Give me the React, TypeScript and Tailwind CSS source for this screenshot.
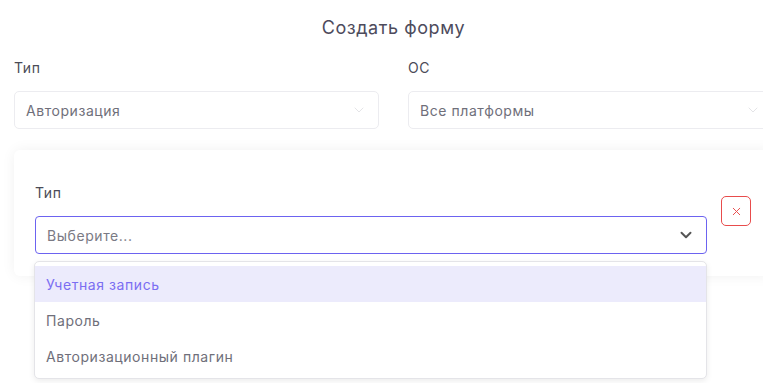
import { ChevronDown, X } from "lucide-react";

const options = ["Учетная запись", "Пароль", "Авторизационный плагин"];

function TopSelect({ label, value }: { label: string; value: string }) {
  return (
    <div>
      <div className="text-[14px] text-[#4b4b57] mb-[14px] leading-[18px]">{label}</div>
      <div className="h-[38px] flex items-center justify-between px-[11px] border border-[#ececf0] rounded-[5px] bg-white">
        <span className="text-[14px] text-[#6f6f7a]">{value}</span>
        <ChevronDown size={16} strokeWidth={1.1} className="text-[#dadade]" />
      </div>
    </div>
  );
}

export default function App() {
  return (
    <div
      className="w-[763px] h-[383px] overflow-hidden bg-white tracking-[0.035em]"
      style={{ fontFamily: "Inter, 'Noto Sans', sans-serif" }}
    >
      <div className="w-[759px] ml-[14px]">
        <h1 className="text-center text-[18px] text-[#4d4b5c] pt-[16px] leading-[24px]">Создать форму</h1>

        <div className="grid grid-cols-2 gap-[29px] mt-[19px]">
          <TopSelect label="Тип" value="Авторизация" />
          <TopSelect label="ОС" value="Все платформы" />
        </div>

        <div className="mt-[21px] bg-white rounded-[6px] shadow-[0_0_14px_rgba(0,0,0,0.06)] px-[21px] pt-[34px] pb-[22px] flex items-start gap-[14px]">
          <div className="w-[672px]">
            <div className="text-[14px] text-[#4b4b57] leading-[18px] mb-[14px]">Тип</div>
            <div className="relative">
              <div className="h-[38px] flex items-center justify-between pl-[11px] pr-[11px] border border-[#6c63f0] rounded-[4px] bg-white">
                <span className="text-[14px] text-[#7a7a84]">Выберите...</span>
                <ChevronDown size={18} strokeWidth={2.6} className="text-[#555]" />
              </div>
              <div className="absolute -left-px right-0 top-[45px] z-10 bg-white border border-[#e4e4e8] rounded-[5px] shadow-[0_2px_6px_rgba(0,0,0,0.08)] py-[4px]">
                {options.map((o, i) => (
                  <div
                    key={o}
                    className={
                      i === 0
                        ? "h-[36px] flex items-center px-[11px] text-[14px] bg-[#ecebfc] text-[#7b6ef2]"
                        : "h-[36px] flex items-center px-[11px] text-[14px] text-[#6f6f7a]"
                    }
                  >
                    {o}
                  </div>
                ))}
              </div>
            </div>
          </div>
          <button className="mt-[12px] w-[30px] h-[30px] flex items-center justify-center border border-[#e84c4c] rounded-[5px] bg-white">
            <X size={13} strokeWidth={1.8} className="text-[#e84c4c]" />
          </button>
        </div>
      </div>
    </div>
  );
}
